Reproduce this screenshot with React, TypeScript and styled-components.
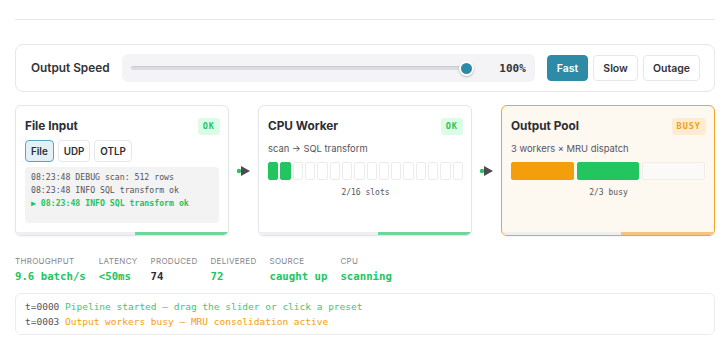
import React, { useState } from 'react'
import styled, { createGlobalStyle } from 'styled-components'

const GlobalStyle = createGlobalStyle`
  html, body {
    margin: 0;
    padding: 0;
    background: #ffffff;
    font-family: Inter, 'Liberation Sans', sans-serif;
    color: #2d2d33;
  }
`

const MONO = `'DejaVu Sans Mono', 'Liberation Mono', monospace`
const GREEN = '#22c55e'
const ORANGE = '#f59e0b'
const TEAL = '#2e8ba8'

const Page = styled.div`
  width: 700px;
  margin-left: 15px;
  padding-top: 19px;
  display: flex;
  flex-direction: column;
`

const Divider = styled.div`
  height: 1px;
  background: #e8e9ec;
  margin-bottom: 24px;
`

const ControlPanel = styled.div`
  display: flex;
  align-items: center;
  gap: 12px;
  padding: 9px 14px;
  border: 1px solid #e6e7ea;
  border-radius: 8px;
  margin-bottom: 13px;
`

const PanelLabel = styled.div`
  flex-shrink: 0;
  white-space: nowrap;
  font-size: 11.8px;
  font-weight: 600;
  color: #333338;
  margin-left: 1px;
`

const SliderBox = styled.div`
  flex: 1;
  height: 28px;
  display: flex;
  align-items: center;
  gap: 16px;
  padding: 0 9px;
  background: #f4f4f6;
  border-radius: 6px;
`

const Range = styled.input`
  flex: 1;
  margin: 0;
  height: 14px;
  background: transparent;
  -webkit-appearance: none;
  appearance: none;

  &::-webkit-slider-runnable-track {
    height: 4px;
    border-radius: 2px;
    background: #dcdde2;
    box-shadow: inset 0 1px 1px rgba(0, 0, 0, 0.08);
  }
  &::-webkit-slider-thumb {
    -webkit-appearance: none;
    width: 15px;
    height: 15px;
    margin-top: -5.5px;
    border-radius: 50%;
    background: ${TEAL};
    border: 2px solid #ffffff;
    box-shadow: 0 1px 2px rgba(0, 0, 0, 0.25);
    box-sizing: border-box;
  }
`

const Percent = styled.div`
  width: 36px;
  text-align: right;
  font-family: ${MONO};
  font-size: 11px;
  font-weight: 700;
  color: #333338;
`

const Presets = styled.div`
  display: flex;
  gap: 5px;
`

const PresetButton = styled.button<{ active?: boolean }>`
  height: 26px;
  padding: 0 9px;
  border-radius: 4px;
  border: 1px solid ${({ active }) => (active ? TEAL : '#e6e7ea')};
  background: ${({ active }) => (active ? TEAL : '#ffffff')};
  color: ${({ active }) => (active ? '#ffffff' : '#333338')};
  font-family: Inter, 'Liberation Sans', sans-serif;
  font-size: 10.5px;
  font-weight: 600;
  cursor: pointer;
`

const Pipeline = styled.div`
  display: grid;
  grid-template-columns: 1fr 29px 1fr 29px 1fr;
  align-items: stretch;
  margin-bottom: 19px;
`

const Card = styled.div<{ busy?: boolean }>`
  display: flex;
  flex-direction: column;
  height: 131px;
  box-sizing: border-box;
  border: ${({ busy }) => (busy ? `1.5px solid #f5a524` : '1px solid #e4e5e9')};
  background: ${({ busy }) => (busy ? '#fdf8f0' : '#ffffff')};
  border-radius: 6px;
  overflow: hidden;
  box-shadow: 0 1px 2px rgba(0, 0, 0, 0.04);
`

const CardBody = styled.div`
  flex: 1;
  display: flex;
  flex-direction: column;
  padding: 11px 8px 0 9px;
`

const CardHead = styled.div`
  display: flex;
  align-items: center;
  justify-content: space-between;
  height: 18px;
  margin-bottom: 5px;
`

const CardTitle = styled.div`
  font-size: 11.8px;
  font-weight: 700;
  color: #2d2d33;
`

const Badge = styled.div<{ busy?: boolean }>`
  height: 17px;
  padding: 0 5px;
  display: flex;
  align-items: center;
  border-radius: 3px;
  font-family: ${MONO};
  font-size: 8.5px;
  font-weight: 700;
  letter-spacing: 1px;
  color: ${({ busy }) => (busy ? ORANGE : GREEN)};
  background: ${({ busy }) => (busy ? '#fdebd3' : '#dcfce7')};
`

const Tabs = styled.div`
  display: flex;
  gap: 4px;
  margin-bottom: 5px;
`

const Tab = styled.button<{ active?: boolean }>`
  height: 22px;
  padding: 0 5px;
  border-radius: 4px;
  border: 1px solid ${({ active }) => (active ? '#5aa6bd' : '#e6e7ea')};
  background: ${({ active }) => (active ? '#e3f1f5' : '#ffffff')};
  color: #2d2d33;
  font-family: Inter, 'Liberation Sans', sans-serif;
  font-size: 9.8px;
  font-weight: 600;
`

const LogBox = styled.div`
  height: 56px;
  box-sizing: border-box;
  padding: 4px 6px;
  background: #f3f3f4;
  border-radius: 4px;
  margin-right: 1px;
`

const LogLine = styled.div<{ latest?: boolean }>`
  font-family: ${MONO};
  font-size: 8.2px;
  line-height: 13px;
  white-space: nowrap;
  color: ${({ latest }) => (latest ? GREEN : '#55555c')};
  font-weight: ${({ latest }) => (latest ? 700 : 400)};
`

const Subtitle = styled.div`
  font-size: 9.4px;
  line-height: 12px;
  color: #55555c;
  margin: 3px 0 7px;
`

const Slots = styled.div`
  display: flex;
  gap: 2px;
  height: 18px;
  margin-bottom: 7px;
`

const Slot = styled.div<{ filled?: boolean }>`
  flex: 1;
  border-radius: 2px;
  box-sizing: border-box;
  background: ${({ filled }) => (filled ? GREEN : '#ffffff')};
  border: 1px solid ${({ filled }) => (filled ? GREEN : '#ececef')};
`

const Workers = styled.div`
  display: flex;
  gap: 3px;
  height: 18px;
  margin: 0 1px 7px 0;
`

const WorkerBar = styled.div<{ tone: 'orange' | 'green' | 'idle' }>`
  flex: 1;
  border-radius: 2px;
  box-sizing: border-box;
  background: ${({ tone }) => (tone === 'orange' ? ORANGE : tone === 'green' ? GREEN : '#fbfaf8')};
  border: 1px solid ${({ tone }) => (tone === 'orange' ? ORANGE : tone === 'green' ? GREEN : '#efeeec')};
`

const Caption = styled.div`
  text-align: center;
  font-family: ${MONO};
  font-size: 8px;
  line-height: 12px;
  color: #55555c;
`

const Activity = styled.div`
  height: 3px;
  background: #eeeff2;
  display: flex;
`

const ActivityFill = styled.div<{ busy?: boolean }>`
  margin-left: 56%;
  flex: 1;
  background: ${({ busy }) => (busy ? '#f6c37a' : '#6fd59a')};
`

const Connector = styled.div`
  display: flex;
  align-items: center;
  justify-content: center;
`

const Stats = styled.div`
  display: flex;
  gap: 13px;
  margin-bottom: 10px;
`

const Stat = styled.div`
  display: flex;
  flex-direction: column;
  gap: 3px;
`

const StatLabel = styled.div`
  font-size: 8px;
  letter-spacing: 0.3px;
  color: #86868d;
  line-height: 12px;
`

const StatValue = styled.div<{ tone?: 'green' | 'dark' }>`
  font-family: ${MONO};
  font-size: 10.7px;
  font-weight: 700;
  line-height: 13px;
  color: ${({ tone }) => (tone === 'dark' ? '#2d2d33' : GREEN)};
  white-space: nowrap;
`

const EventLog = styled.div`
  border: 1px solid #ececef;
  border-radius: 6px;
  padding: 5px 9px 5px 9px;
  height: 42px;
  box-sizing: border-box;
`

const EventLine = styled.div`
  font-family: ${MONO};
  font-size: 9.5px;
  line-height: 15px;
  white-space: nowrap;
  color: #55555c;
`

const EventText = styled.span<{ tone: 'green' | 'orange' }>`
  color: ${({ tone }) => (tone === 'green' ? '#3cc96b' : ORANGE)};
`

function Arrow() {
  return (
    <Connector>
      <svg width="16" height="12" viewBox="0 0 16 12">
        <circle cx="3" cy="6" r="2.2" fill={GREEN} />
        <polygon points="5,1 14,6 5,11" fill="#4a4a50" />
      </svg>
    </Connector>
  )
}

const stats: { label: string; value: string; tone?: 'green' | 'dark' }[] = [
  { label: 'THROUGHPUT', value: '9.6 batch/s' },
  { label: 'LATENCY', value: '<50ms' },
  { label: 'PRODUCED', value: '74', tone: 'dark' },
  { label: 'DELIVERED', value: '72' },
  { label: 'SOURCE', value: 'caught up' },
  { label: 'CPU', value: 'scanning' }
]

export default function App() {
  const [speed, setSpeed] = useState(100)
  const [preset, setPreset] = useState('Fast')
  const [source, setSource] = useState('File')

  return (
    <Page>
      <GlobalStyle />
      <Divider />
      <ControlPanel>
        <PanelLabel>Output Speed</PanelLabel>
        <SliderBox>
          <Range
            type="range"
            min={0}
            max={100}
            value={speed}
            onChange={e => setSpeed(Number(e.target.value))}
          />
          <Percent>{speed}%</Percent>
        </SliderBox>
        <Presets>
          {['Fast', 'Slow', 'Outage'].map(p => (
            <PresetButton key={p} active={preset === p} onClick={() => setPreset(p)}>
              {p}
            </PresetButton>
          ))}
        </Presets>
      </ControlPanel>

      <Pipeline>
        <Card>
          <CardBody>
            <CardHead>
              <CardTitle>File Input</CardTitle>
              <Badge>OK</Badge>
            </CardHead>
            <Tabs>
              {['File', 'UDP', 'OTLP'].map(s => (
                <Tab key={s} active={source === s} onClick={() => setSource(s)}>
                  {s}
                </Tab>
              ))}
            </Tabs>
            <LogBox>
              <LogLine>08:23:48 DEBUG scan: 512 rows</LogLine>
              <LogLine>08:23:48 INFO SQL transform ok</LogLine>
              <LogLine latest>▶ 08:23:48 INFO SQL transform ok</LogLine>
            </LogBox>
          </CardBody>
          <Activity>
            <ActivityFill />
          </Activity>
        </Card>

        <Arrow />

        <Card>
          <CardBody>
            <CardHead>
              <CardTitle>CPU Worker</CardTitle>
              <Badge>OK</Badge>
            </CardHead>
            <Subtitle>scan → SQL transform</Subtitle>
            <Slots>
              {Array.from({ length: 16 }).map((_, i) => (
                <Slot key={i} filled={i < 2} />
              ))}
            </Slots>
            <Caption>2/16 slots</Caption>
          </CardBody>
          <Activity>
            <ActivityFill />
          </Activity>
        </Card>

        <Arrow />

        <Card busy>
          <CardBody>
            <CardHead>
              <CardTitle>Output Pool</CardTitle>
              <Badge busy>BUSY</Badge>
            </CardHead>
            <Subtitle>3 workers × MRU dispatch</Subtitle>
            <Workers>
              <WorkerBar tone="orange" />
              <WorkerBar tone="green" />
              <WorkerBar tone="idle" />
            </Workers>
            <Caption>2/3 busy</Caption>
          </CardBody>
          <Activity>
            <ActivityFill busy />
          </Activity>
        </Card>
      </Pipeline>

      <Stats>
        {stats.map(s => (
          <Stat key={s.label}>
            <StatLabel>{s.label}</StatLabel>
            <StatValue tone={s.tone}>{s.value}</StatValue>
          </Stat>
        ))}
      </Stats>

      <EventLog>
        <EventLine>
          t=0000 <EventText tone="green">Pipeline started — drag the slider or click a preset</EventText>
        </EventLine>
        <EventLine>
          t=0003 <EventText tone="orange">Output workers busy — MRU consolidation active</EventText>
        </EventLine>
      </EventLog>
    </Page>
  )
}
